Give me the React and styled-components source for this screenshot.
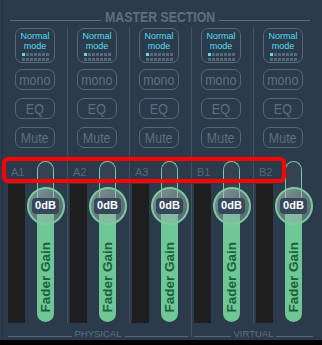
import React from "react";
import styled, { createGlobalStyle } from "styled-components";

const BG = "#2c3b4b";
const DIVIDER = "#405264";
const BORDER = "#55677a";
const GREY_TEXT = "#5d6f80";
const CYAN = "#55dbf2";
const GREEN = "#6fc696";
const GREEN_LINE = "#78cb9f";

const Global = createGlobalStyle`
  html, body { margin: 0; padding: 0; background: #000; }
  body { font-family: "Liberation Sans", Arial, sans-serif; }
  * { box-sizing: border-box; }
`;

const Panel = styled.div`
  position: relative;
  width: 322px;
  height: 340px;
  background: ${BG};
  box-shadow: inset 2px 0 0 ${BG}, inset 3px 0 0 #243241;
  display: flex;
  flex-direction: column;
`;

const Header = styled.div`
  height: 27px;
  padding: 8px 12px 0 10px;
  display: flex;
  align-items: flex-start;
  gap: 4px;
`;

const HeaderLine = styled.div`
  flex: 1;
  height: 1px;
  margin-top: 12px;
  background: #5a6c7d;
`;

const TitleBox = styled.div`
  width: 110px;
  white-space: nowrap;
  overflow: visible;
`;

const Title = styled.span`
  display: inline-block;
  font-size: 14.5px;
  line-height: 14px;
  font-weight: bold;
  color: ${GREY_TEXT};
  transform: scaleX(0.85);
  transform-origin: left center;
`;

const ColumnsRow = styled.div`
  display: grid;
  grid-template-columns: repeat(5, 62px);
  padding-left: 5px;
  height: 296px;
`;

const Column = styled.div`
  border-left: 1px solid ${(p) => (p.$first ? "transparent" : DIVIDER)};
  display: flex;
  flex-direction: column;
  align-items: flex-start;
`;

const ModeButton = styled.div`
  margin: 1px 0 0 9px;
  width: 40px;
  height: 35px;
  border: 1.5px solid ${BORDER};
  border-radius: 7px;
  padding-top: 1.5px;
  display: flex;
  flex-direction: column;
  align-items: center;
`;

const ModeLine = styled.div`
  font-size: 9px;
  line-height: 10px;
  height: 10px;
  color: ${CYAN};
  text-align: center;
  white-space: nowrap;
`;

const DotGrid = styled.div`
  margin-top: 2px;
  display: grid;
  grid-template-columns: repeat(7, 3px);
  gap: 2px 1px;
`;

const Dot = styled.div`
  width: 3px;
  height: 3px;
  background: ${(p) => (p.$on ? CYAN : "#56687a")};
`;

const ToggleButton = styled.div`
  margin: ${(p) => p.$gap}px 0 0 9px;
  width: 40px;
  height: 21px;
  border: 1.5px solid ${BORDER};
  border-radius: 7px;
  display: flex;
  align-items: center;
  justify-content: center;
`;

const ToggleText = styled.span`
  display: inline-block;
  font-size: 15px;
  line-height: 15px;
  color: ${GREY_TEXT};
  transform: scaleX(0.83);
  white-space: nowrap;
`;

const StripBody = styled.div`
  margin: 13px 0 0 2px;
  height: 162px;
  display: flex;
  align-items: flex-start;
`;

const MeterCol = styled.div`
  width: 17px;
  display: flex;
  flex-direction: column;
`;

const ChannelLabel = styled.div`
  margin-top: 5px;
  padding-left: 3px;
  font-size: 11px;
  line-height: 12px;
  color: #56687a;
`;

const Meter = styled.div`
  margin-top: 3px;
  height: 142px;
  border-top: 3px solid #343638;
  border-radius: 2px 2px 1px 1px;
  background-color: #101010;
  background-image: radial-gradient(circle, #262626 0.6px, transparent 0.9px);
  background-size: 2px 2px;
`;

const FaderCol = styled.div`
  position: relative;
  margin-left: 12px;
  width: 17px;
  height: 161px;
  display: flex;
  flex-direction: column;
`;

const TrackEmpty = styled.div`
  height: 45px;
  border: 1.5px solid ${GREEN_LINE};
  border-bottom: none;
  border-radius: 9px 9px 0 0;
  background: rgba(255, 255, 255, 0.04);
`;

const TrackFill = styled.div`
  flex: 1;
  background: ${GREEN};
  border-radius: 0 0 9px 9px;
  display: flex;
  justify-content: center;
  align-items: flex-end;
  padding-bottom: 9px;
`;

const FillLabel = styled.span`
  writing-mode: vertical-rl;
  transform: rotate(180deg);
  font-size: 13.5px;
  line-height: 19px;
  font-weight: bold;
  color: #1a6236;
  white-space: nowrap;
`;

const Knob = styled.div`
  position: absolute;
  left: 50%;
  top: 26px;
  width: 38px;
  height: 38px;
  margin-left: -19px;
  border-radius: 50%;
  border: 2px solid ${GREEN_LINE};
  background: linear-gradient(
    135deg,
    rgba(185, 205, 198, 0.58) 0%,
    rgba(160, 182, 176, 0.5) 45%,
    rgba(140, 165, 158, 0.45) 100%
  );
  display: flex;
  align-items: center;
  justify-content: center;
`;

const KnobLabel = styled.div`
  background: #35475a;
  color: #ffffff;
  font-size: 11px;
  line-height: 13px;
  font-weight: bold;
  padding: 1px 3px 2px;
  border-radius: 4px;
`;

const Footer = styled.div`
  display: grid;
  grid-template-columns: 186px 124px;
  padding-left: 5px;
  height: 17px;
`;

const FooterGroup = styled.div`
  height: 14px;
  border-left: 1px solid ${(p) => (p.$divided ? DIVIDER : "transparent")};
  padding: 6px ${(p) => (p.$divided ? 2 : 3)}px 0 2px;
  display: flex;
  align-items: flex-start;
  gap: 3px;
`;

const FooterLine = styled.div`
  flex: 1;
  height: 1px;
  margin-top: 7px;
  background: #55677a;
`;

const FooterText = styled.span`
  font-size: 9.5px;
  line-height: 10px;
  color: ${GREY_TEXT};
  white-space: nowrap;
`;

const Highlight = styled.div`
  position: absolute;
  left: 2px;
  top: 157px;
  width: 284px;
  height: 26px;
  border: 4px solid #ff0000;
  border-radius: 6px;
  pointer-events: none;
`;

const channels = ["A1", "A2", "A3", "B1", "B2"];

function Strip({ name, first }) {
  return (
    <Column $first={first}>
      <ModeButton>
        <ModeLine>Normal</ModeLine>
        <ModeLine>mode</ModeLine>
        <DotGrid>
          {Array.from({ length: 14 }).map((_, i) => (
            <Dot key={i} $on={i === 0} />
          ))}
        </DotGrid>
      </ModeButton>
      <ToggleButton $gap={6}>
        <ToggleText>mono</ToggleText>
      </ToggleButton>
      <ToggleButton $gap={8}>
        <ToggleText>EQ</ToggleText>
      </ToggleButton>
      <ToggleButton $gap={8}>
        <ToggleText>Mute</ToggleText>
      </ToggleButton>
      <StripBody>
        <MeterCol>
          <ChannelLabel>{name}</ChannelLabel>
          <Meter />
        </MeterCol>
        <FaderCol>
          <TrackEmpty />
          <TrackFill>
            <FillLabel>Fader Gain</FillLabel>
          </TrackFill>
          <Knob>
            <KnobLabel>0dB</KnobLabel>
          </Knob>
        </FaderCol>
      </StripBody>
    </Column>
  );
}

export default function App() {
  return (
    <>
      <Global />
      <Panel>
        <Header>
          <HeaderLine />
          <TitleBox>
            <Title>MASTER SECTION</Title>
          </TitleBox>
          <HeaderLine />
        </Header>
        <ColumnsRow>
          {channels.map((c, i) => (
            <Strip key={c} name={c} first={i === 0} />
          ))}
        </ColumnsRow>
        <Footer>
          <FooterGroup>
            <FooterLine />
            <FooterText>PHYSICAL</FooterText>
            <FooterLine />
          </FooterGroup>
          <FooterGroup $divided>
            <FooterLine />
            <FooterText>VIRTUAL</FooterText>
            <FooterLine />
          </FooterGroup>
        </Footer>
        <Highlight />
      </Panel>
    </>
  );
}
